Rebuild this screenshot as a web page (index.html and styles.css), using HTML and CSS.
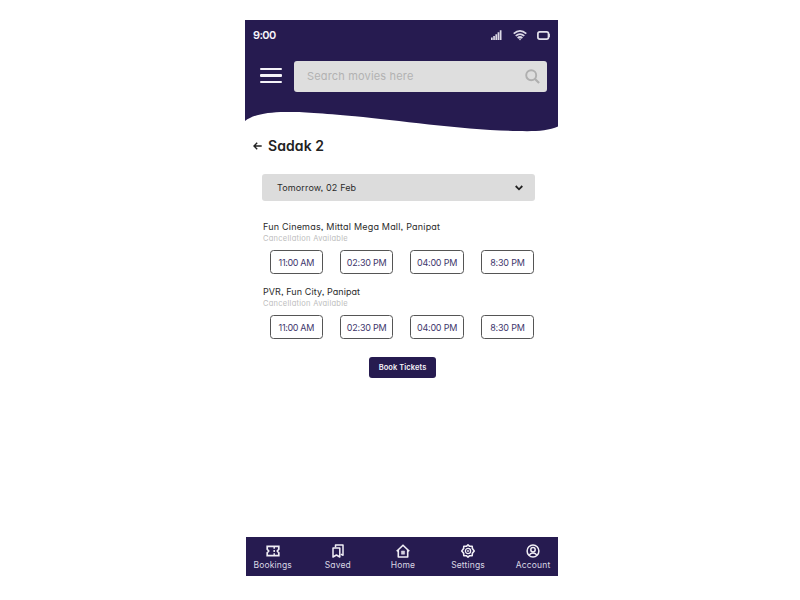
FILE: index.html
```html
<!DOCTYPE html>
<html lang="en">
<head>
<meta charset="utf-8">
<title>Sadak 2 – Showtimes</title>
<link rel="stylesheet" href="styles.css">
</head>
<body>
<main class="phone">
  <header class="header">
    <div class="status">
      <span class="clock">9:00</span>
      <div class="status-icons">
        <svg class="signal" width="11" height="11" viewBox="0 0 11 11" fill="#dcd9e6"><path d="M0 7.400h1.700V10H0zM2.200 6.100h1.700V10H2.200zM4.400 4.300h1.700V10H4.400zM6.600 2.300h1.700V10H6.600zM8.800.2h1.700V10H8.800z"/></svg>
        <svg class="wifi" width="14" height="11" viewBox="0 0 14 11" fill="none" stroke="#dcd9e6" stroke-width="1.700"><path d="M.7 3.700Q7-1.800 13.300 3.700M2.700 5.900q4.300-3.700 8.600 0M4.600 8q2.400-2 4.800 0"/><path d="M5.600 8.600h2.800L7 10.400z" fill="#dcd9e6" stroke="none"/></svg>
        <svg class="battery" width="13" height="9" viewBox="0 0 13 9" fill="none" stroke="#e4e2ec" stroke-width="1.700"><rect x=".9" y=".9" width="10.600" height="7.200" rx="1.900"/><path d="M12.400 2.800v3.400" stroke-width="1"/></svg>
      </div>
    </div>
    <div class="search-row">
      <div class="burger"><i></i><i></i><i></i></div>
      <div class="search">
        <span>Search movies here</span>
        <svg width="15" height="15" viewBox="0 0 15 15" fill="none" stroke="#b0b0b0" stroke-width="1.900"><circle cx="6.200" cy="6.200" r="5"/><path d="M9.700 9.700l4.400 4.300" stroke-width="2.200"/></svg>
      </div>
    </div>
    <svg class="wave" width="313" height="30" viewBox="0 0 313 30"><path fill="#261b50" d="M0 0H313V24.500C303 29 289 29.500 273 29C220 28.300 154 18.500 110 14.300C75 10.800 55 9.800 40 9.900C22 10.200 8 12.500 0 19Z"/></svg>
  </header>

  <h1 class="title">
    <svg width="9" height="8" viewBox="0 0 9 8" fill="none" stroke="#222" stroke-width="1.400"><path d="M8.700 4H1M4.200.8L1 4l3.200 3.200"/></svg>
    <span>Sadak 2</span>
  </h1>

  <div class="date">
    <span>Tomorrow, 02 Feb</span>
    <svg width="8" height="6" viewBox="0 0 8 6" fill="none" stroke="#222" stroke-width="1.800"><path d="M.7 1L4 4.300 7.300 1"/></svg>
  </div>

  <section class="cinema">
    <h2 class="name-fun">Fun Cinemas, Mittal Mega Mall, Panipat</h2>
    <p>Cancellation Available</p>
    <div class="times"><button class="eleven">11:00 AM</button><button>02:30 PM</button><button>04:00 PM</button><button>8:30 PM</button></div>
  </section>
  <section class="cinema">
    <h2 class="name-pvr">PVR, Fun City, Panipat</h2>
    <p>Cancellation Available</p>
    <div class="times"><button class="eleven">11:00 AM</button><button>02:30 PM</button><button>04:00 PM</button><button>8:30 PM</button></div>
  </section>

  <button class="book">Book Tickets</button>

  <nav class="nav">
    <a><svg width="14" height="14" viewBox="0 0 14 14" fill="none" stroke="#f0eef5" stroke-width="1.700"><path d="M1.200 2.300H12.800V5.200L11.300 7 12.800 8.800V11.700H1.200V8.800L2.700 7 1.200 5.200Z"/><path d="M8.200 3.100v1.700M8.200 6.100v1.800M8.200 9.200v1.700" stroke-width="1.500"/></svg><span>Bookings</span></a>
    <a><svg width="14" height="14" viewBox="0 0 14 14" fill="none" stroke="#f0eef5" stroke-width="1.500" stroke-linejoin="round"><path d="M2 3.900H8.800V13L5.400 11 2 13Z"/><path d="M4.500 3.500V1.100H12V11.300L9.800 10.200"/></svg><span>Saved</span></a>
    <a><svg width="14" height="14" viewBox="0 0 14 14" fill="none" stroke="#f0eef5" stroke-width="1.600" stroke-linejoin="round"><path d="M.7 7.300L7 1.200l6.300 6.100M2.300 6V13h9.400V6"/><path d="M5.400 7h3.200v3.200H5.400z" fill="#d5d1e0" stroke="#d5d1e0" stroke-width=".6"/></svg><span>Home</span></a>
    <a><svg width="14" height="14" viewBox="0 0 14 14" fill="none" stroke="#f0eef5" stroke-width="1.600" stroke-linejoin="round"><path d="M7 .8l1.700 1.500 2.500-.1.200 2.400L13.200 7l-1.800 2.300-.2 2.500-2.500-.1L7 13.200l-1.700-1.500-2.500.1-.2-2.500L.8 7l1.800-2.400.2-2.400 2.500.1Z"/><circle cx="7" cy="7" r="2.600" stroke-width="1.300"/><circle cx="7" cy="7" r=".9" fill="#f0eef5" stroke="none"/></svg><span>Settings</span></a>
    <a><svg width="14" height="14" viewBox="0 0 14 14" fill="none" stroke="#f0eef5" stroke-width="1.500"><circle cx="7" cy="7" r="5.900"/><circle cx="7" cy="5.700" r="2.200"/><path d="M3.200 11.200C4.500 8.300 9.500 8.300 10.800 11.200"/></svg><span>Account</span></a>
  </nav>
</main>
</body>
</html>
```
FILE: styles.css
```css
* { box-sizing: border-box; margin: 0; padding: 0; }
body {
  width: 800px; height: 600px; padding: 20px 0 0 245px; overflow: hidden;
  background: #fff; color: #2b2b2b;
  font-family: Inter, "Open Sans", sans-serif;
  font-feature-settings: "cv11", "ss03";
}
svg { display: block; flex: none; }
span, h2, p, button { white-space: nowrap; }
.phone { width: 313px; height: 556px; display: flex; flex-direction: column; }

.header { height: 112px; flex: none; display: flex; flex-direction: column; }
.status { height: 41px; flex: none; padding: 0 8px; display: flex; justify-content: space-between; background: #261b50; }
.clock { padding-top: 8px; color: #f6f5fa; font-size: 11px; line-height: 15px; font-weight: 600; letter-spacing: -.6px; }
.status-icons { height: 30px; display: flex; align-items: center; }
.wifi { margin: 0 10px 0 11px; }
.search-row { height: 41px; flex: none; padding: 0 11px 10px 15px; display: flex; gap: 12px; background: #261b50; }
.burger { width: 22px; padding-top: 7px; display: flex; flex-direction: column; gap: 4px; }
.burger i { height: 2.300px; border-radius: 1px; background: #f4f3f8; }
.search { flex: 1; height: 31px; padding: 0 7px 0 13px; display: flex; align-items: center; justify-content: space-between; border-radius: 3px; background: #dedede; color: #b2b2b2; font-size: 11px; letter-spacing: .17px; }
.search span { margin-top: -2px; }
.wave { flex: none; }

.title { height: 28px; flex: none; padding-left: 8px; display: flex; align-items: center; gap: 6px; color: #222; font-size: 14px; font-weight: 600; letter-spacing: .08px; }
.title span { margin-top: -1px; }
.date { width: 273px; height: 27px; flex: none; margin: 14px 0 0 17px; padding: 0 12px 0 15px; display: flex; align-items: center; justify-content: space-between; border-radius: 3px; background: #dcdcdc; font-size: 9px; letter-spacing: .14px; }

.cinema { height: 65px; flex: none; padding-left: 18px; }
.date + .cinema { margin-top: 18px; }
.cinema h2 { padding-top: 1px; font-size: 9px; line-height: 13px; font-weight: 400; }
.cinema .name-fun { letter-spacing: .2px; }
.cinema .name-pvr { letter-spacing: .08px; }
.cinema p { color: #bdbdbd; font-size: 7.500px; line-height: 11px; letter-spacing: .27px; }
.times { margin: 6px 0 0 6.500px; display: flex; gap: 16.900px; }
.times button { width: 53.500px; height: 24px; border: 1px solid #555; border-radius: 3.500px; background: #fff; color: #40366c; font: inherit; font-feature-settings: inherit; font-size: 9px; letter-spacing: -.2px; }
.times .eleven { letter-spacing: -.35px; }
.book { width: 67px; height: 21px; flex: none; margin: 8px 0 0 124px; border: 0; border-radius: 3px; background: #261b50; color: #f3f1f8; font: inherit; font-feature-settings: inherit; font-size: 7.500px; font-weight: 600; letter-spacing: .08px; }

.nav { height: 39px; flex: none; margin: auto 0 0 1px; display: flex; gap: 15.600px; padding: 7px 0 0 2px; background: #261b50; }
.nav a { width: 49.500px; flex: none; display: flex; flex-direction: column; align-items: center; color: #d9d6e3; font-size: 8.500px; line-height: 14px; letter-spacing: .15px; }
```
